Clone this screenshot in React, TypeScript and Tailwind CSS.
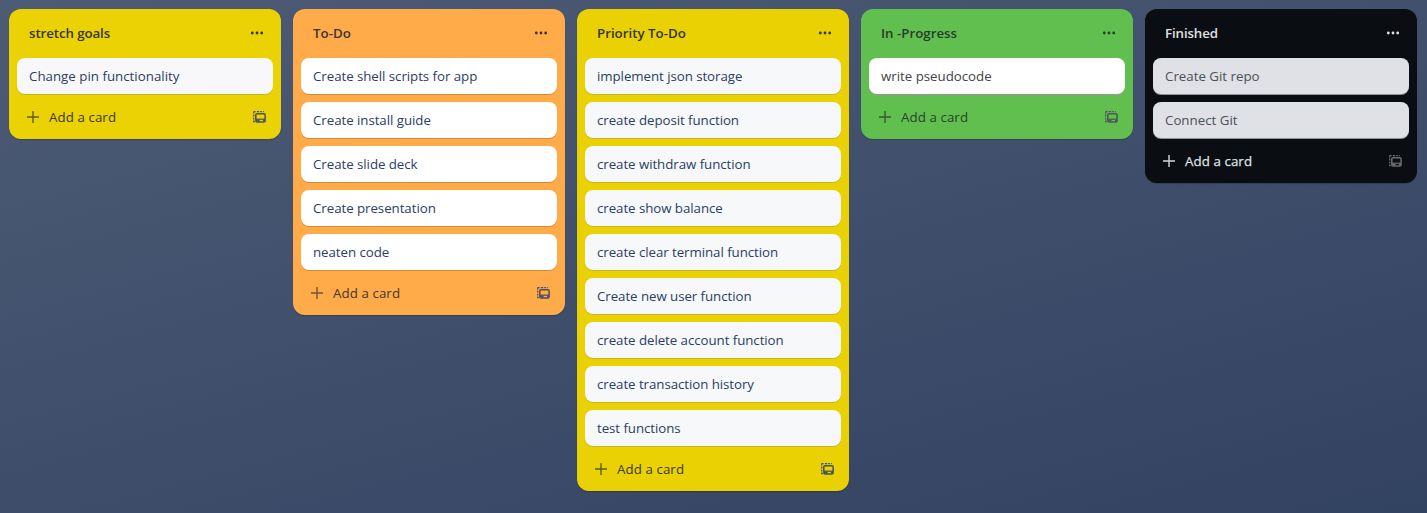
type Column = {
  title: string;
  cards: string[];
  panel: string;
  heading: string;
  card: string;
  add: string;
  plus: string;
  template: string;
};

const columns: Column[] = [
  {
    title: "stretch goals",
    cards: ["Change pin functionality"],
    panel: "bg-[#ebd205]",
    heading: "text-[#353521] tracking-[-0.09px]",
    card: "bg-[#f8f8fa] text-[#2b3e64] shadow-[0_1px_0_#c9b51d] tracking-[0.01px]",
    add: "text-[#3c3a1c]",
    plus: "text-[#625b17]",
    template: "text-[#4a5360]",
  },
  {
    title: "To-Do",
    cards: [
      "Create shell scripts for app",
      "Create install guide",
      "Create slide deck",
      "Create presentation",
      "neaten code",
    ],
    panel: "bg-[#ffab4a]",
    heading: "text-[#3a3431]",
    card: "bg-white text-[#2b3e64] shadow-[0_1px_0_#d38b36] tracking-[-0.05px]",
    add: "text-[#45382d]",
    plus: "text-[#755439]",
    template: "text-[#4a4e68]",
  },
  {
    title: "Priority To-Do",
    cards: [
      "implement json storage",
      "create deposit function",
      "create withdraw function",
      "create show balance",
      "create clear terminal function",
      "Create new user function",
      "create delete account function",
      "create transaction history",
      "test functions",
    ],
    panel: "bg-[#ead104]",
    heading: "text-[#353521]",
    card: "bg-[#f7f8fa] text-[#2b3e64] shadow-[0_1px_0_#c9b51d] tracking-[-0.06px]",
    add: "text-[#3c3a1c]",
    plus: "text-[#625b17]",
    template: "text-[#405060]",
  },
  {
    title: "In -Progress",
    cards: ["write pseudocode"],
    panel: "bg-[#61bf50]",
    heading: "text-[#273b2b]",
    card: "bg-white text-[#424448] shadow-[0_1px_0_#9a939d] tracking-[-0.02px]",
    add: "text-[#29422b]",
    plus: "text-[#365b34]",
    template: "text-[#4f5654]",
  },
  {
    title: "Finished",
    cards: ["Create Git repo", "Connect Git"],
    panel: "bg-[#0a0d11]",
    heading: "text-[#e0e2e6] tracking-[-0.12px]",
    card: "bg-[#dfe1e6] text-[#4d5056] shadow-[0_1px_0_#8e9196]",
    add: "text-[#dfe1e5] [-webkit-text-stroke:0.25px]",
    plus: "text-[#d5d7db]",
    template: "text-[#6a6c70]",
  },
];

function More() {
  return (
    <svg width="14" height="4" viewBox="0 0 14 4" fill="currentColor">
      <circle cx="2.3" cy="2" r="1.4" />
      <circle cx="7" cy="2" r="1.4" />
      <circle cx="11.7" cy="2" r="1.4" />
    </svg>
  );
}

function Plus() {
  return (
    <svg width="12" height="12" viewBox="0 0 12 12" stroke="currentColor" strokeWidth="1.4" strokeLinecap="round">
      <path d="M6 .3v11.4M.3 6h11.4" />
    </svg>
  );
}

function Template() {
  return (
    <svg width="13" height="12" viewBox="0 0 13 12" fill="none" stroke="currentColor">
      <path d="M.7 2.4V1.4Q.7.7 1.4.7H2.6M3.8.7h2.4M7.2.7h1.6M9.8.7h1M.7 3.6v2M.7 6.8v1.8M.7 9.6v1h1.1" strokeWidth="1.3" />
      <rect x="2.8" y="2.8" width="9.3" height="8.2" rx="1.3" strokeWidth="1.5" />
      <path d="M3 8.2h9" strokeWidth="1.2" />
      <path d="M3 9.5h3.6M10 9.5h2" strokeWidth="2" />
    </svg>
  );
}

function List({ list }: { list: Column }) {
  return (
    <section className={`w-[272px] shrink-0 rounded-xl px-2 shadow-[0_1px_1px_#09152540] ${list.panel}`}>
      <header className={`flex h-[49px] items-center justify-between pr-[9px] pb-px pl-3 ${list.heading}`}>
        <h2 className="text-[13.3px] leading-5 font-semibold">{list.title}</h2>
        <button aria-label="List actions"><More /></button>
      </header>
      <ul className="flex flex-col gap-2">
        {list.cards.map((card) => (
          <li key={card} className={`flex h-9 items-center rounded-lg px-3 ${list.card}`}>
            {card}
          </li>
        ))}
      </ul>
      <footer className="flex h-[45px] items-center justify-between pr-[7px] pl-[10px]">
        <button className={`flex items-center gap-[10px] tracking-[0.08px] ${list.add}`}>
          <span className={list.plus}><Plus /></span>
          Add a card
        </button>
        <button aria-label="Create from template" className={list.template}><Template /></button>
      </footer>
    </section>
  );
}

export default function App() {
  return (
    <main className="flex h-[513px] w-[1427px] items-start gap-3 overflow-hidden bg-linear-[165deg,#4d5b75,#324261] p-[9px] font-['Open_Sans',sans-serif] text-[13.3px] leading-5 whitespace-nowrap">
      {columns.map((list) => (
        <List key={list.title} list={list} />
      ))}
    </main>
  );
}
